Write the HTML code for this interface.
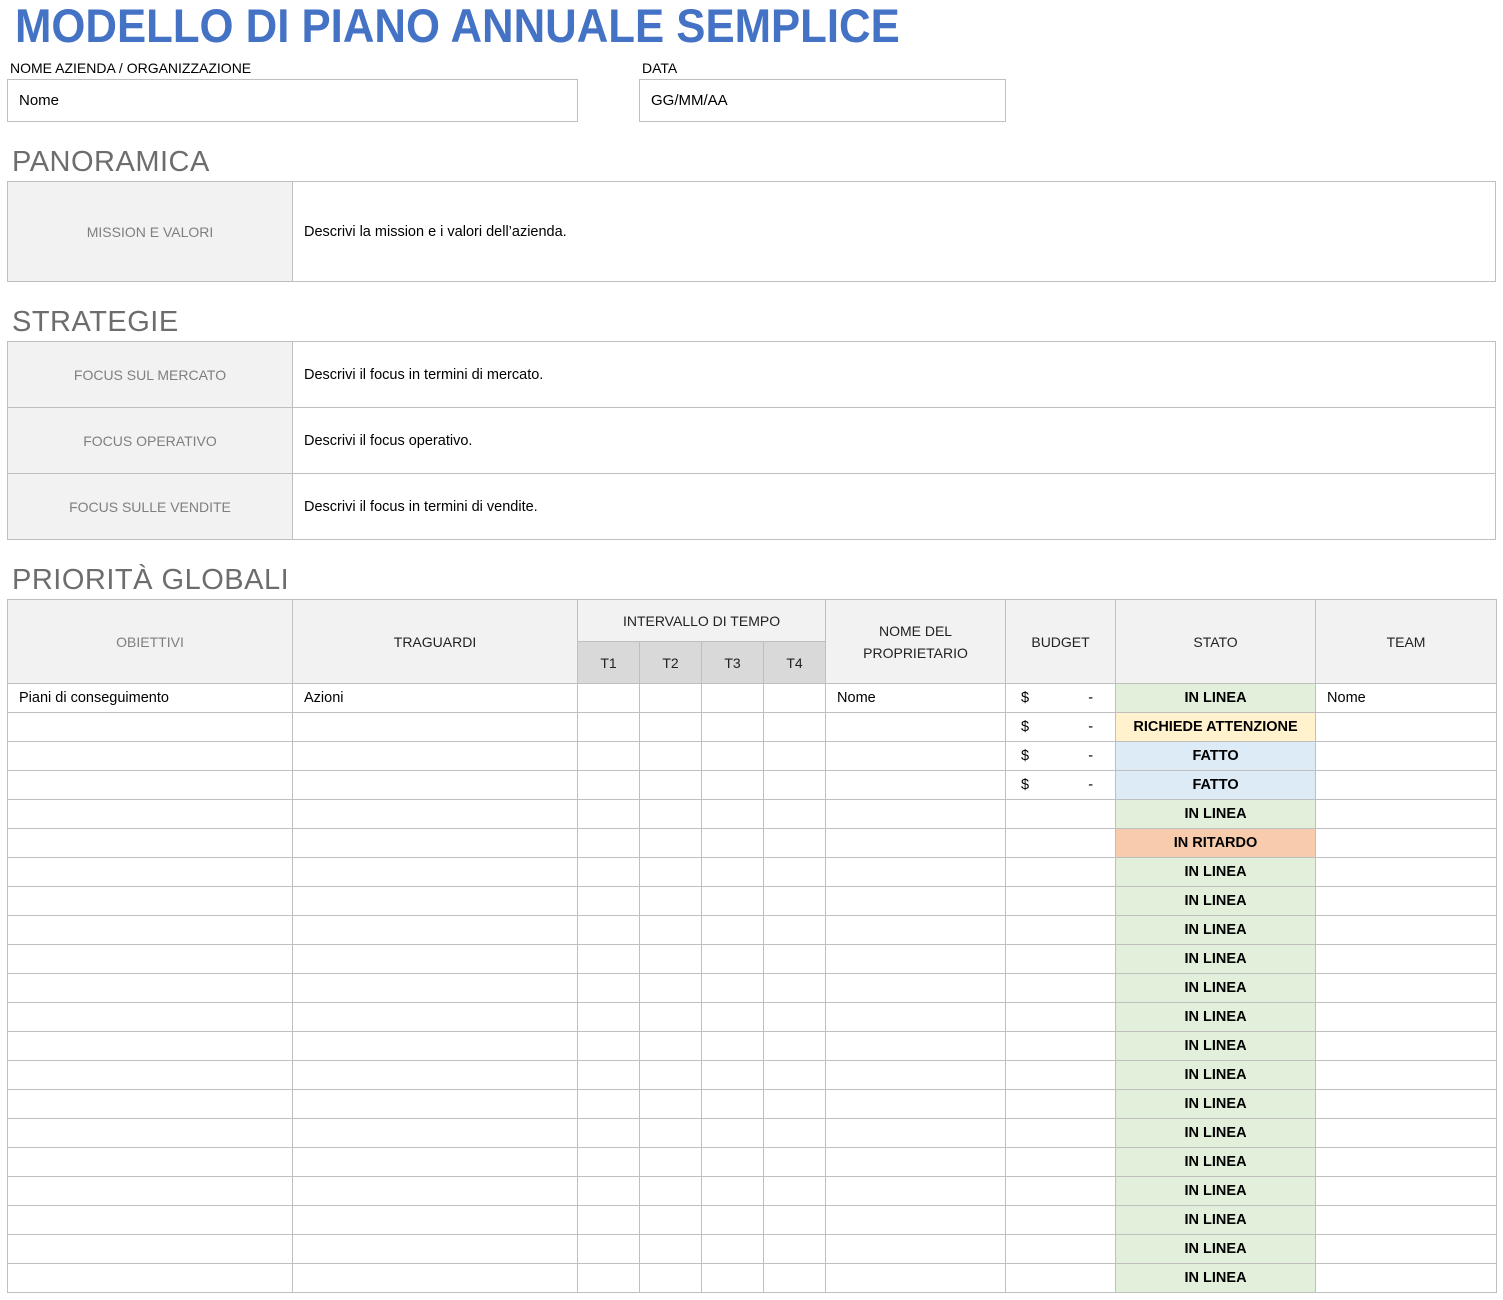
<!DOCTYPE html>
<html><head><meta charset="utf-8"><style>
body{margin:0;width:1503px;height:1300px;background:#fff;font-family:"Liberation Sans",sans-serif;position:relative;overflow:hidden;color:#000}
.a{position:absolute}
.title{left:15px;top:-2px;font-size:47px;font-weight:bold;color:#4472c4;white-space:nowrap;transform:scaleX(0.93);transform-origin:left top}
.lbl{font-size:14px;color:#000}
.box{border:1px solid #bfbfbf;box-sizing:border-box;font-size:15px;padding-left:11px;display:flex;align-items:center}
.h{font-size:29px;color:#6d6d6d;letter-spacing:0.5px}
table{border-collapse:collapse;table-layout:fixed;position:absolute;left:7px}
td{border:1px solid #bfbfbf;padding:0;font-size:14.5px}
.g{background:#f2f2f2;color:#7f7f7f;text-align:center;font-size:14px}
.d{padding-left:11px}
.hd{background:#f2f2f2;text-align:center;font-size:14px;color:#222}
.t{background:#d9d9d9;text-align:center;font-size:14px;color:#222}
.s{text-align:center;font-weight:bold;font-size:14.5px}
.L{background:#e2efda}.R{background:#fff2cc}.F{background:#ddebf7}.X{background:#f8cbad}
.b{padding-left:15px;padding-right:22px}
.b span{float:right}
tr.r{height:29px}
</style></head><body>
<div class="a title">MODELLO DI PIANO ANNUALE SEMPLICE</div>
<div class="a lbl" style="left:10px;top:60px">NOME AZIENDA / ORGANIZZAZIONE</div>
<div class="a lbl" style="left:642px;top:60px">DATA</div>
<div class="a box" style="left:7px;top:79px;width:571px;height:43px">Nome</div>
<div class="a box" style="left:639px;top:79px;width:367px;height:43px">GG/MM/AA</div>

<div class="a h" style="left:12px;top:146px">PANORAMICA</div>
<table style="top:181px;width:1489px">
<colgroup><col style="width:285px"><col></colgroup>
<tr style="height:100px"><td class="g">MISSION E VALORI</td><td class="d">Descrivi la mission e i valori dell’azienda.</td></tr>
</table>

<div class="a h" style="left:12px;top:306px">STRATEGIE</div>
<table style="top:341px;width:1489px">
<colgroup><col style="width:285px"><col></colgroup>
<tr style="height:66px"><td class="g">FOCUS SUL MERCATO</td><td class="d">Descrivi il focus in termini di mercato.</td></tr>
<tr style="height:66px"><td class="g">FOCUS OPERATIVO</td><td class="d">Descrivi il focus operativo.</td></tr>
<tr style="height:66px"><td class="g">FOCUS SULLE VENDITE</td><td class="d">Descrivi il focus in termini di vendite.</td></tr>
</table>

<div class="a h" style="left:12px;top:564px">PRIORITÀ GLOBALI</div>
<table style="top:599px;width:1489px">
<colgroup><col style="width:285px"><col style="width:285px"><col style="width:62px"><col style="width:62px"><col style="width:62px"><col style="width:62px"><col style="width:180px"><col style="width:110px"><col style="width:200px"><col style="width:181px"></colgroup>
<tr style="height:42px"><td class="g" rowspan="2">OBIETTIVI</td><td class="hd" rowspan="2">TRAGUARDI</td><td class="hd" colspan="4">INTERVALLO DI TEMPO</td><td class="hd" rowspan="2" style="line-height:22px">NOME DEL<br>PROPRIETARIO</td><td class="hd" rowspan="2">BUDGET</td><td class="hd" rowspan="2">STATO</td><td class="hd" rowspan="2">TEAM</td></tr>
<tr style="height:42px"><td class="t">T1</td><td class="t">T2</td><td class="t">T3</td><td class="t">T4</td></tr>
<tr class="r"><td class="d">Piani di conseguimento</td><td class="d">Azioni</td><td></td><td></td><td></td><td></td><td class="d">Nome</td><td class="b">$<span>-</span></td><td class="s L">IN LINEA</td><td class="d">Nome</td></tr>
<tr class="r"><td></td><td></td><td></td><td></td><td></td><td></td><td></td><td class="b">$<span>-</span></td><td class="s R">RICHIEDE ATTENZIONE</td><td></td></tr>
<tr class="r"><td></td><td></td><td></td><td></td><td></td><td></td><td></td><td class="b">$<span>-</span></td><td class="s F">FATTO</td><td></td></tr>
<tr class="r"><td></td><td></td><td></td><td></td><td></td><td></td><td></td><td class="b">$<span>-</span></td><td class="s F">FATTO</td><td></td></tr>
<tr class="r"><td></td><td></td><td></td><td></td><td></td><td></td><td></td><td></td><td class="s L">IN LINEA</td><td></td></tr>
<tr class="r"><td></td><td></td><td></td><td></td><td></td><td></td><td></td><td></td><td class="s X">IN RITARDO</td><td></td></tr>
<tr class="r"><td></td><td></td><td></td><td></td><td></td><td></td><td></td><td></td><td class="s L">IN LINEA</td><td></td></tr>
<tr class="r"><td></td><td></td><td></td><td></td><td></td><td></td><td></td><td></td><td class="s L">IN LINEA</td><td></td></tr>
<tr class="r"><td></td><td></td><td></td><td></td><td></td><td></td><td></td><td></td><td class="s L">IN LINEA</td><td></td></tr>
<tr class="r"><td></td><td></td><td></td><td></td><td></td><td></td><td></td><td></td><td class="s L">IN LINEA</td><td></td></tr>
<tr class="r"><td></td><td></td><td></td><td></td><td></td><td></td><td></td><td></td><td class="s L">IN LINEA</td><td></td></tr>
<tr class="r"><td></td><td></td><td></td><td></td><td></td><td></td><td></td><td></td><td class="s L">IN LINEA</td><td></td></tr>
<tr class="r"><td></td><td></td><td></td><td></td><td></td><td></td><td></td><td></td><td class="s L">IN LINEA</td><td></td></tr>
<tr class="r"><td></td><td></td><td></td><td></td><td></td><td></td><td></td><td></td><td class="s L">IN LINEA</td><td></td></tr>
<tr class="r"><td></td><td></td><td></td><td></td><td></td><td></td><td></td><td></td><td class="s L">IN LINEA</td><td></td></tr>
<tr class="r"><td></td><td></td><td></td><td></td><td></td><td></td><td></td><td></td><td class="s L">IN LINEA</td><td></td></tr>
<tr class="r"><td></td><td></td><td></td><td></td><td></td><td></td><td></td><td></td><td class="s L">IN LINEA</td><td></td></tr>
<tr class="r"><td></td><td></td><td></td><td></td><td></td><td></td><td></td><td></td><td class="s L">IN LINEA</td><td></td></tr>
<tr class="r"><td></td><td></td><td></td><td></td><td></td><td></td><td></td><td></td><td class="s L">IN LINEA</td><td></td></tr>
<tr class="r"><td></td><td></td><td></td><td></td><td></td><td></td><td></td><td></td><td class="s L">IN LINEA</td><td></td></tr>
<tr class="r"><td></td><td></td><td></td><td></td><td></td><td></td><td></td><td></td><td class="s L">IN LINEA</td><td></td></tr>
</table>
</body></html>
